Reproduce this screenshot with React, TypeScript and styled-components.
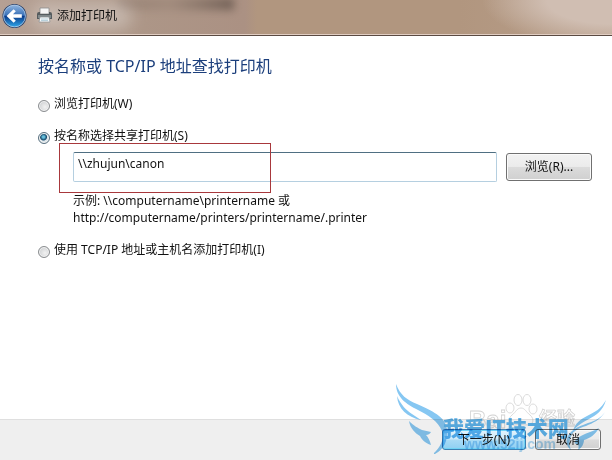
import React, { useState } from "react";
import styled, { createGlobalStyle, css } from "styled-components";

const GlobalStyle = createGlobalStyle`
  * { box-sizing: border-box; }
  body {
    margin: 0;
    background: #fff;
    color: #111;
    font: 12px/16px "Noto Sans", "Noto Sans CJK SC", sans-serif;
  }
`;

const Window = styled.div`
  position: relative;
  display: flex;
  flex-direction: column;
  min-height: 100vh;
`;

const TitleBar = styled.header`
  position: relative;
  display: flex;
  align-items: center;
  height: 36px;
  padding: 0 0 4px 2px;
  overflow: hidden;
  border-bottom: 1px solid #5a4a42;
  box-shadow: inset 0 -1px #e0cdc2;
  background:
    radial-gradient(ellipse 130px 48px at 100% 0, #d0beb2 0 50%, #d0beb200 100%),
    linear-gradient(90deg, #b5a094 0, #ad9788 20%, #ab9183 40%, #b1967f 42%, #b1967f 75%, #b89e8a 100%);
`;

const Glow = styled.span`
  position: absolute;
  left: 32px;
  top: 2px;
  width: 100px;
  height: 28px;
  border-radius: 14px;
  background: #d5cbc4;
  opacity: 0.6;
  filter: blur(8px);
`;

const Smudge = styled.span`
  position: absolute;
  left: 118px;
  top: -2px;
  width: 116px;
  height: 12px;
  background: linear-gradient(90deg, #8f7b6f, #9d8779 45%, #806e62 70%, #594b43);
  opacity: 0.7;
  filter: blur(4px);
`;

const BackButton = styled.button`
  position: relative;
  padding: 0;
  border: 0;
  background: none;
  line-height: 0;
`;

const Title = styled.h1`
  position: relative;
  display: flex;
  align-items: center;
  gap: 4px;
  margin: 0 0 0 9px;
  font-size: 12px;
  font-weight: 400;
`;

const Content = styled.main`
  flex: 1;
  padding: 19px 20px 20px 38px;
`;

const Heading = styled.h2`
  margin: 0 0 19px;
  color: #1c3f7c;
  font-size: 16px;
  font-weight: 400;
  line-height: 22px;
`;

const Option = styled.label`
  display: flex;
  align-items: center;
  gap: 4px;
`;

const Radio = styled.input`
  appearance: none;
  width: 12px;
  height: 12px;
  margin: 3px 0 0;
  border: 1px solid #8a8d90;
  border-radius: 50%;
  background: radial-gradient(circle at 60% 60%, #f2f2f2, #c2c5c8);
  box-shadow: inset 0 0 0 1px #f4f4f4;
  &:checked {
    border-color: #58707f;
    background: radial-gradient(circle at 45% 40%, #66c0dd 0 1px, #15496b 3px, #15496b 3px, #dce5ea 4px);
  }
`;

const Shared = styled.section`
  margin: 16px 0;
`;

const Details = styled.div`
  padding: 8px 0 0 35px;
`;

const Row = styled.div`
  position: relative;
  display: flex;
  align-items: center;
  gap: 9px;
`;

const NameField = styled.input`
  flex: 1;
  min-width: 0;
  height: 30px;
  padding: 0 4px 8px;
  border: 1px solid #b5cfe0;
  border-top-color: #4f6f82;
  border-radius: 2px;
  outline: 0;
  background: #fff;
  color: #111;
  font: inherit;
`;

const Example = styled.p`
  margin: 10px 0 0;
  line-height: 17px;
`;

const Marker = styled.span`
  position: absolute;
  left: -14px;
  top: -9px;
  width: 212px;
  height: 50px;
  border: 1px solid #a8383c;
  pointer-events: none;
`;

const Button = styled.button<{ $primary?: boolean; $width: number; $height: number }>`
  width: ${(p) => p.$width}px;
  height: ${(p) => p.$height}px;
  padding: 0;
  border: 1px solid #707070;
  border-radius: 3px;
  background: linear-gradient(#f2f2f2, #ebebeb 48%, #dbdbdb 52%, #d0d0d0);
  box-shadow: inset 0 0 0 1px #fafafa;
  color: #111;
  font: inherit;
  ${(p) =>
    p.$primary &&
    css`
      border-color: #3c7fb1;
      background: linear-gradient(#e2f3fc, #cdebfa 48%, #a9dbf5 52%, #8fd0f2);
      box-shadow: inset 0 0 0 1px #6fd3f5;
    `}
`;

const Footer = styled.footer`
  display: flex;
  align-items: flex-start;
  justify-content: flex-end;
  gap: 9px;
  height: 41px;
  padding: 9px 11px 0;
  border-top: 1px solid #dfdfdf;
  background: #efefef;
`;

const Watermark = styled.svg`
  position: absolute;
  right: 0;
  bottom: 0;
  pointer-events: none;
  mix-blend-mode: multiply;
`;

const BackIcon = () => (
  <svg width="25" height="26" viewBox="0 0 25 26" aria-hidden="true">
    <defs>
      <linearGradient id="ball" x1="0" y1="0" x2="0" y2="1">
        <stop offset="0" stopColor="#8fb4de" />
        <stop offset=".46" stopColor="#3b72b9" />
        <stop offset=".52" stopColor="#0b3c8b" />
        <stop offset="1" stopColor="#2fa5e8" />
      </linearGradient>
    </defs>
    <circle cx="12.5" cy="13" r="12" fill="#243f6b" />
    <circle cx="12.5" cy="13" r="10.9" fill="url(#ball)" stroke="#b9d2ec" strokeWidth=".8" />
    <path d="M4.6 13l7-6.8 2.2 2L11 11.2h8.8v3.6H11l2.8 3-2.2 2z" fill="#fff" />
  </svg>
);

const PrinterIcon = () => (
  <svg width="17" height="17" viewBox="0 0 17 17" aria-hidden="true">
    <path d="M4 1h9v6H4z" fill="#f5f5f5" stroke="#8b8b8b" strokeWidth=".8" />
    <path d="M1 7q0-2 2-2h1v2h9V5h1q2 0 2 2v5H1z" fill="#555b5e" />
    <path d="M2 8h13v3H2z" fill="#7f8789" />
    <path d="M4 10h9l1 5H3z" fill="#f6f8f9" stroke="#8a8f92" strokeWidth=".7" />
    <path d="M5 12h7M5 13.5h7" stroke="#aac7d4" strokeWidth=".8" />
  </svg>
);

const SiteMark = () => (
  <Watermark width="222" height="90" viewBox="390 370 222 90" aria-hidden="true">
    <g fill="#fff" fillOpacity=".55" stroke="#d2d2d2" strokeWidth=".8">
      <ellipse cx="510" cy="408" rx="4" ry="5" />
      <ellipse cx="518" cy="400" rx="4" ry="5.5" />
      <ellipse cx="527" cy="400" rx="4" ry="5.5" />
      <ellipse cx="533" cy="409" rx="4" ry="5" />
      <path d="M521 408c4 0 5 4 9 7 5 4 3 10-2 10-4 0-9-1-13 0-6 1-8-6-3-10 4-3 5-7 9-7z" />
      <text x="469" y="428" fontFamily="Liberation Sans" fontWeight="700" fontSize="24">Bai</text>
      <text x="539" y="425" fontFamily="Noto Sans CJK SC" fontWeight="700" fontSize="18">经验</text>
    </g>
    <g fill="#86c7f2">
      <path d="M396 384c4 11 11 16 21 20 15 7 28 12 30 25 1 12-3 20-12 25-2 0-1-1 1-3 6-7 8-13 6-20-4-10-14-16-24-21-12-6-22-13-22-26z" />
      <path d="M397 396c4 9 9 14 15 18l9 6c-14-3-23-11-24-24z" />
      <path d="M409 421c5 5 9 7 13 9l9 2c-1 2-3 3-5 3 2 2 4 6 5 10-6-2-9-5-11-9-5-3-10-8-11-15z" />
      <path d="M606 400c-3 11-10 15-17 19-8 4-13 8-16 12 2-8 8-12 14-15 8-4 14-7 19-16z" />
      <path d="M605 412c-5 8-12 11-19 14-7 2-13 5-15 10-2 5-2 10 0 14-6-4-6-12 0-18 5-5 10-6 17-9 7-2 13-5 17-11z" />
      <path d="M599 428c-4 7-9 10-15 12 0 3-2 8-6 10 1-3 1-5-1-6-2 0-3-1-2-3 5-7 15-8 24-13z" />
    </g>
    <g fill="#5cb2ea">
      <text x="443" y="436" fontFamily="Noto Sans CJK SC" fontWeight="900" fontSize="21">我爱IT技术网</text>
      <text x="464" y="449" fontFamily="Liberation Sans" fontWeight="700" fontSize="14" fillOpacity=".5">www.52ij.com</text>
    </g>
  </Watermark>
);

export default function App() {
  const [method, setMethod] = useState("name");
  const [name, setName] = useState("\\\\zhujun\\canon");
  const radio = (value: string) => (
    <Radio type="radio" name="method" checked={method === value} onChange={() => setMethod(value)} />
  );

  return (
    <Window>
      <GlobalStyle />
      <TitleBar>
        <Smudge />
        <Glow />
        <BackButton type="button" aria-label="返回"><BackIcon /></BackButton>
        <Title><PrinterIcon />添加打印机</Title>
      </TitleBar>
      <Content>
        <Heading>按名称或 TCP/IP 地址查找打印机</Heading>
        <Option>{radio("browse")}浏览打印机(W)</Option>
        <Shared>
          <Option>{radio("name")}按名称选择共享打印机(S)</Option>
          <Details>
            <Row>
              <NameField aria-label="打印机名称" value={name} onChange={(e) => setName(e.target.value)} />
              <Button type="button" $width={86} $height={28}>浏览(R)...</Button>
              <Marker />
            </Row>
            <Example>
              示例: \\computername\printername 或<br />
              http://computername/printers/printername/.printer
            </Example>
          </Details>
        </Shared>
        <Option>{radio("tcpip")}使用 TCP/IP 地址或主机名添加打印机(I)</Option>
      </Content>
      <Footer>
        <Button type="button" $primary $width={84} $height={21}>下一步(N)</Button>
        <Button type="button" $width={66} $height={21}>取消</Button>
      </Footer>
      <SiteMark />
    </Window>
  );
}
